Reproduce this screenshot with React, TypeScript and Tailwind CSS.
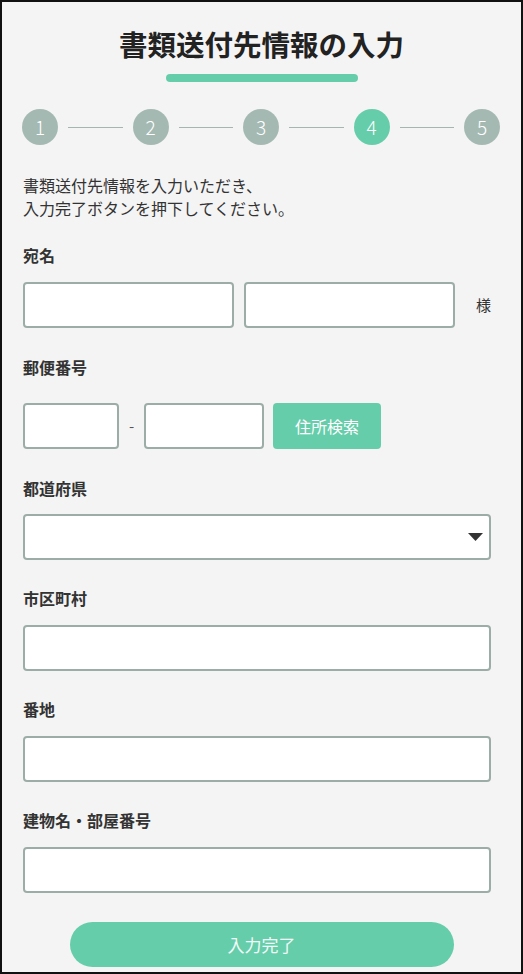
import React from "react";

const font = { fontFamily: '"Noto Sans CJK JP", "Noto Sans", sans-serif' };

const steps = [1, 2, 3, 4, 5];
const current = 4;

const inputCls =
  "h-[46px] rounded-[4px] border-2 border-[#9cada7] bg-white outline-none px-3 text-[16px] text-[#333]";

const Label: React.FC<{ text: string; className?: string }> = ({ text, className = "" }) => (
  <div className={`h-[22px] leading-[22px] text-[16px] font-bold text-[#333] ${className}`}>{text}</div>
);

export default function App() {
  return (
    <div className="w-[523px] h-[974px] border-2 border-[#111] bg-[#f4f4f4] overflow-hidden" style={font}>
      {/* header */}
      <h1 className="pt-[22px] h-[62px] leading-[40px] text-center text-[28.5px] font-bold text-[#222]">
        書類送付先情報の入力
      </h1>
      <div className="mx-auto mt-[10px] w-[192px] h-[8px] rounded-full bg-[#66cdaa]" />

      {/* stepper */}
      <div className="mt-[27px] ml-[20px] w-[478px] flex items-center">
        {steps.map((n, i) => (
          <React.Fragment key={n}>
            <div
              className={`w-[36px] h-[36px] rounded-full flex items-center justify-center text-white text-[19px] font-light ${
                n === current ? "bg-[#66cdaa]" : "bg-[#a5b9b3]"
              }`}
            >
              {n}
            </div>
            {i < steps.length - 1 && <div className="flex-1 mx-[10px] h-px bg-[#a5b5af]" />}
          </React.Fragment>
        ))}
      </div>

      <div className="pl-[21px]">
        <p className="mt-[29px] text-[16px] leading-[23px] text-[#333]">
          書類送付先情報を入力いただき、
          <br />
          入力完了ボタンを押下してください。
        </p>

        {/* name */}
        <Label text="宛名" className="mt-[24px]" />
        <div className="mt-[16px] flex items-center">
          <input className={`${inputCls} w-[211px]`} />
          <input className={`${inputCls} w-[211px] ml-[10px]`} />
          <span className="ml-[21px] text-[15px] text-[#333]">様</span>
        </div>

        {/* postal */}
        <Label text="郵便番号" className="mt-[28px]" />
        <div className="mt-[25px] flex items-center">
          <input className={`${inputCls} w-[96px]`} />
          <span className="w-[25px] text-center text-[15px] text-[#555]">-</span>
          <input className={`${inputCls} w-[120px]`} />
          <button className="ml-[9px] w-[108px] h-[46px] rounded-[4px] bg-[#66cdaa] text-white text-[16px]">
            住所検索
          </button>
        </div>

        {/* prefecture */}
        <Label text="都道府県" className="mt-[28px]" />
        <div className={`${inputCls} mt-[15px] w-[468px] relative`}>
          <svg className="absolute right-[6px] top-[17px]" width="15" height="8" viewBox="0 0 15 8">
            <path d="M0 0 H15 L7.5 8 Z" fill="#333" />
          </svg>
        </div>

        <Label text="市区町村" className="mt-[27px]" />
        <input className={`${inputCls} mt-[16px] w-[468px] block`} />

        <Label text="番地" className="mt-[27px]" />
        <input className={`${inputCls} mt-[16px] w-[468px] block`} />

        <Label text="建物名・部屋番号" className="mt-[27px]" />
        <input className={`${inputCls} mt-[16px] w-[468px] block`} />
      </div>

      <button className="block mx-auto mt-[29px] w-[384px] h-[45px] rounded-full bg-[#66cdaa] text-[#f2fbf8] text-[17px]">
        入力完了
      </button>
    </div>
  );
}
